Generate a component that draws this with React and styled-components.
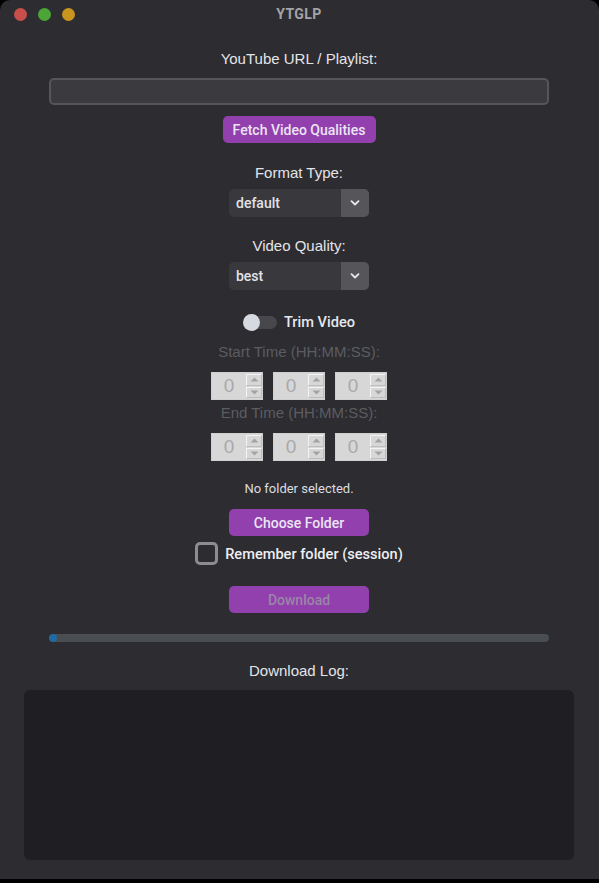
import React from "react";
import styled, { createGlobalStyle } from "styled-components";

const GlobalStyle = createGlobalStyle`
  html, body {
    margin: 0;
    padding: 0;
    background: #000;
  }
  body {
    font-family: "Liberation Sans", Arial, sans-serif;
  }
`;

const App = () => {
  return (
    <>
      <GlobalStyle />
      <StWindow>
        <StTitleBar>
          <StLights>
            <StLight $color="#c9504a" />
            <StLight $color="#4ca536" />
            <StLight $color="#c8951f" />
          </StLights>
          <StTitle>YTGLP</StTitle>
        </StTitleBar>

        <StBody>
          <StLabel $top={22}>YouTube URL / Playlist:</StLabel>
          <StInput />
          <StButton $top={11} $w={153}>Fetch Video Qualities</StButton>

          <StLabel $top={21}>Format Type:</StLabel>
          <Dropdown value="default" />

          <StLabel $top={20}>Video Quality:</StLabel>
          <Dropdown value="best" />

          <StToggleRow>
            <StToggle>
              <StKnob />
            </StToggle>
            <StToggleText>Trim Video</StToggleText>
          </StToggleRow>

          <StLabel $top={12} $dim>Start Time (HH:MM:SS):</StLabel>
          <TimeRow />
          <StLabel $top={4} $dim>End Time (HH:MM:SS):</StLabel>
          <TimeRow />

          <StSmallText>No folder selected.</StSmallText>
          <StButton $top={12} $w={140}>Choose Folder</StButton>

          <StCheckRow>
            <StCheckBox />
            <StCheckText>Remember folder (session)</StCheckText>
          </StCheckRow>

          <StButton $top={21} $w={140} $disabled>Download</StButton>

          <StProgress>
            <StProgressFill style={{ width: "1.6%" }} />
          </StProgress>

          <StLabel $top={20}>Download Log:</StLabel>
          <StLog />
        </StBody>
      </StWindow>
    </>
  );
};

const Dropdown = ({ value }) => (
  <StDropdown>
    <StDropValue>{value}</StDropValue>
    <StDropArrow>
      <svg width="10" height="6" viewBox="0 0 10 6">
        <path
          d="M1.5 1.2 L5 4.5 L8.5 1.2"
          fill="none"
          stroke="#e8e8ec"
          strokeWidth="1.8"
          strokeLinecap="round"
          strokeLinejoin="round"
        />
      </svg>
    </StDropArrow>
  </StDropdown>
);

const Spin = () => (
  <StSpin>
    <StSpinValue>0</StSpinValue>
    <StSpinArrows>
      <StSpinBtn>
        <svg width="9" height="5" viewBox="0 0 9 5">
          <path d="M0.5 4.5 L4.5 0.5 L8.5 4.5 Z" fill="#a3a3a3" />
        </svg>
      </StSpinBtn>
      <StSpinBtn>
        <svg width="9" height="5" viewBox="0 0 9 5">
          <path d="M0.5 0.5 L4.5 4.5 L8.5 0.5 Z" fill="#a3a3a3" />
        </svg>
      </StSpinBtn>
    </StSpinArrows>
  </StSpin>
);

const TimeRow = () => (
  <StTimeRow>
    <Spin />
    <Spin />
    <Spin />
  </StTimeRow>
);

export default App;

const StWindow = styled.div`
  width: 599px;
  height: 879px;
  background: #2c2c31;
  border-radius: 10px 10px 0 0;
  overflow: hidden;
  display: flex;
  flex-direction: column;
`;

const StTitleBar = styled.div`
  height: 28px;
  flex-shrink: 0;
  display: flex;
  align-items: center;
  justify-content: center;
  position: relative;
`;

const StLights = styled.div`
  position: absolute;
  left: 14px;
  top: 8px;
  display: flex;
  gap: 11px;
`;

const StLight = styled.span`
  width: 13px;
  height: 13px;
  border-radius: 50%;
  background: ${(p) => p.$color};
`;

const StTitle = styled.div`
  font-family: "Roboto", "Liberation Sans", sans-serif;
  font-weight: 700;
  font-size: 14px;
  color: #a4a4a8;
  letter-spacing: 0.4px;
  padding-right: 1px;
`;

const StBody = styled.div`
  display: flex;
  flex-direction: column;
  align-items: center;
  padding-right: 1px;
`;

const StLabel = styled.div`
  margin-top: ${(p) => p.$top}px;
  height: 18px;
  line-height: 18px;
  font-size: 15px;
  color: ${(p) => (p.$dim ? "#5c5c61" : "#e4e4e8")};
`;

const StInput = styled.div`
  margin-top: 10px;
  width: 500px;
  height: 27px;
  box-sizing: border-box;
  border: 2px solid #55555a;
  border-radius: 5px;
  background: #3a3a3f;
`;

const StButton = styled.div`
  margin-top: ${(p) => p.$top}px;
  width: ${(p) => p.$w}px;
  height: 27px;
  border-radius: 5px;
  background: #9140ae;
  display: flex;
  align-items: center;
  justify-content: center;
  font-family: "Roboto", "Liberation Sans", sans-serif;
  font-weight: 500;
  font-size: 14px;
  color: ${(p) => (p.$disabled ? "#9a86a6" : "#ece4f4")};
`;

const StDropdown = styled.div`
  margin-top: 7px;
  width: 140px;
  height: 28px;
  border-radius: 5px;
  background: #38383d;
  display: flex;
  overflow: hidden;
`;

const StDropValue = styled.div`
  flex: 1;
  display: flex;
  align-items: center;
  padding-left: 7px;
  font-family: "Roboto", "Liberation Sans", sans-serif;
  font-weight: 500;
  font-size: 14px;
  color: #e2e2e6;
`;

const StDropArrow = styled.div`
  width: 28px;
  background: #56565a;
  display: flex;
  align-items: center;
  justify-content: center;
`;

const StToggleRow = styled.div`
  margin-top: 23px;
  height: 18px;
  display: flex;
  align-items: center;
  gap: 7px;
  padding-left: 2px;
`;

const StToggle = styled.div`
  position: relative;
  width: 32px;
  height: 13px;
  border-radius: 7px;
  background: #47474c;
`;

const StKnob = styled.span`
  position: absolute;
  left: -2px;
  top: -2px;
  width: 17px;
  height: 17px;
  border-radius: 50%;
  background: #d6d9df;
`;

const StToggleText = styled.div`
  font-family: "Roboto", "Liberation Sans", sans-serif;
  font-weight: 500;
  font-size: 14.6px;
  color: #e6e8ee;
`;

const StTimeRow = styled.div`
  margin-top: 11px;
  display: flex;
  gap: 10px;
`;

const StSpin = styled.div`
  width: 52px;
  height: 28px;
  background: #d7d7d7;
  display: flex;
  box-sizing: border-box;
  border: 1px solid #d0d0d0;
`;

const StSpinValue = styled.div`
  flex: 1;
  display: flex;
  align-items: center;
  justify-content: center;
  font-family: "Liberation Sans", Arial, sans-serif;
  font-size: 19px;
  color: #a9a9a9;
`;

const StSpinArrows = styled.div`
  width: 16px;
  display: flex;
  flex-direction: column;
  gap: 1px;
  padding: 1px 0;
`;

const StSpinBtn = styled.div`
  flex: 1;
  box-sizing: border-box;
  border: 1px solid #f4f4f4;
  border-right-color: #bdbdbd;
  border-bottom-color: #bdbdbd;
  display: flex;
  align-items: center;
  justify-content: center;
`;

const StSmallText = styled.div`
  margin-top: 20px;
  height: 16px;
  line-height: 16px;
  font-family: "Roboto", "Liberation Sans", sans-serif;
  font-size: 13px;
  color: #dcdce0;
`;

const StCheckRow = styled.div`
  margin-top: 6px;
  height: 23px;
  display: flex;
  align-items: center;
  gap: 7px;
`;

const StCheckBox = styled.div`
  width: 23px;
  height: 23px;
  box-sizing: border-box;
  border: 3px solid #8c8c91;
  border-radius: 5px;
`;

const StCheckText = styled.div`
  font-family: "Roboto", "Liberation Sans", sans-serif;
  font-weight: 500;
  font-size: 14.6px;
  color: #eeeef2;
`;

const StProgress = styled.div`
  margin-top: 21px;
  width: 500px;
  height: 8px;
  border-radius: 4px;
  background: #4a4d52;
  overflow: hidden;
`;

const StProgressFill = styled.div`
  height: 100%;
  border-radius: 4px;
  background: #1f6aa5;
`;

const StLog = styled.div`
  margin-top: 10px;
  width: 550px;
  height: 170px;
  border-radius: 6px;
  background: #1f1f23;
`;
